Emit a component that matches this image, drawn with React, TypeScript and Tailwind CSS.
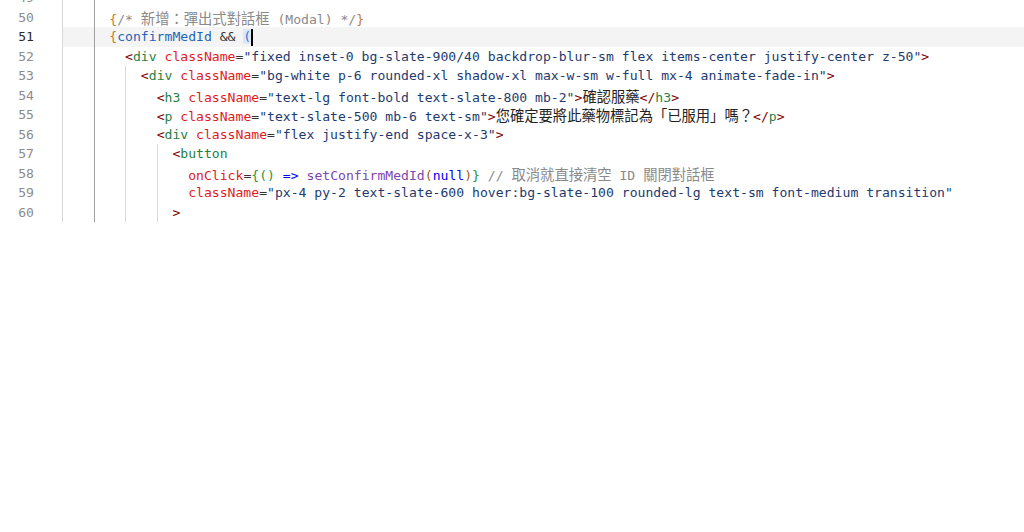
import React from "react";

type Tok = [string, string];

const C = {
  br1: "text-[#c17d2b]",
  cm: "text-[#8a8a8a]",
  id: "text-[#1f64b8]",
  op: "text-[#333333]",
  b2: "text-[#3b6fd6] bg-[#dce8f8]",
  tg: "text-[#800000]",
  tn: "text-[#267f42]",
  at: "text-[#e01b1b]",
  st: "text-[#1e3a6e]",
  tx: "text-[#222222]",
  gr: "text-[#319331]",
  kw: "text-[#0000ff]",
  fn: "text-[#7e46b0]",
  bn: "text-[#a0601a]",
};

type Line = { n: number; indent: number; toks: Tok[]; active?: boolean; cursor?: number };

const lines: Line[] = [
  { n: 49, indent: 6, toks: [] },
  { n: 50, indent: 6, toks: [["{", C.br1], ["/* 新增：彈出式對話框 (Modal) */", C.cm], ["}", C.br1]] },
  {
    n: 51,
    indent: 6,
    active: true,
    toks: [["{", C.br1], ["confirmMedId", C.id], [" && ", C.op], ["(", C.b2]],
  },
  {
    n: 52,
    indent: 8,
    toks: [
      ["<", C.tg],
      ["div", C.tn],
      [" ", C.op],
      ["className", C.at],
      ["=", C.op],
      ['"fixed inset-0 bg-slate-900/40 backdrop-blur-sm flex items-center justify-center z-50"', C.st],
      [">", C.tg],
    ],
  },
  {
    n: 53,
    indent: 10,
    toks: [
      ["<", C.tg],
      ["div", C.tn],
      [" ", C.op],
      ["className", C.at],
      ["=", C.op],
      ['"bg-white p-6 rounded-xl shadow-xl max-w-sm w-full mx-4 animate-fade-in"', C.st],
      [">", C.tg],
    ],
  },
  {
    n: 54,
    indent: 12,
    toks: [
      ["<", C.tg],
      ["h3", C.tn],
      [" ", C.op],
      ["className", C.at],
      ["=", C.op],
      ['"text-lg font-bold text-slate-800 mb-2"', C.st],
      [">", C.tg],
      ["確認服藥", C.tx],
      ["</", C.tg],
      ["h3", C.tn],
      [">", C.tg],
    ],
  },
  {
    n: 55,
    indent: 12,
    toks: [
      ["<", C.tg],
      ["p", C.tn],
      [" ", C.op],
      ["className", C.at],
      ["=", C.op],
      ['"text-slate-500 mb-6 text-sm"', C.st],
      [">", C.tg],
      ["您確定要將此藥物標記為「已服用」嗎？", C.tx],
      ["</", C.tg],
      ["p", C.tn],
      [">", C.tg],
    ],
  },
  {
    n: 56,
    indent: 12,
    toks: [
      ["<", C.tg],
      ["div", C.tn],
      [" ", C.op],
      ["className", C.at],
      ["=", C.op],
      ['"flex justify-end space-x-3"', C.st],
      [">", C.tg],
    ],
  },
  { n: 57, indent: 14, toks: [["<", C.tg], ["button", C.tn]] },
  {
    n: 58,
    indent: 16,
    toks: [
      ["onClick", C.at],
      ["=", C.op],
      ["{", C.gr],
      ["()", C.gr],
      [" ", C.op],
      ["=>", C.kw],
      [" ", C.op],
      ["setConfirmMedId", C.fn],
      ["(", C.bn],
      ["null", C.kw],
      [")", C.bn],
      ["}", C.gr],
      [" ", C.op],
      ["// 取消就直接清空 ID 關閉對話框", C.cm],
    ],
  },
  {
    n: 59,
    indent: 16,
    toks: [
      ["className", C.at],
      ["=", C.op],
      ['"px-4 py-2 text-slate-600 hover:bg-slate-100 rounded-lg text-sm font-medium transition"', C.st],
    ],
  },
  { n: 60, indent: 14, toks: [[">", C.tg]] },
];

const CJK = /([\u3000-\u303f\u3400-\u9fff\uff00-\uffef]+)/;

function renderText(text: string) {
  const parts = text.split(CJK);
  return parts.map((p, i) =>
    i % 2 === 1 ? (
      <span
        key={i}
        className="text-[14.3px] [font-family:'Noto_Sans_CJK_TC','Noto_Sans_CJK_SC',sans-serif]"
      >
        {p}
      </span>
    ) : (
      <React.Fragment key={i}>{p}</React.Fragment>
    )
  );
}

function Indent({ indent }: { indent: number }) {
  const blocks: React.ReactNode[] = [];
  let col = 0;
  while (col < indent) {
    const w = Math.min(4, indent - col);
    const guideClass =
      col === 4 ? "border-l border-[#a0a0a0]" : "border-l border-[#d9d9d9]";
    blocks.push(
      <span
        key={col}
        className={`inline-block h-[19.5px] align-top ${guideClass}`}
        style={{ width: `${w * 7.89}px` }}
      />
    );
    col += w;
  }
  return <>{blocks}</>;
}

export default function App() {
  return (
    <div className="w-[1024px] h-[532px] overflow-hidden bg-white">
      <div className="-mt-[12px] [font-family:'DejaVu_Sans_Mono',monospace] text-[13.1px]">
        {lines.map((l) => (
          <div key={l.n} className="flex h-[19.5px] leading-[19.5px]">
            <div
              className={`w-[62px] shrink-0 pr-[28px] text-right ${
                l.active ? "text-[#2b2b2b]" : "text-[#8c8c8c]"
              }`}
            >
              {l.n}
            </div>
            <div
              className={`flex-1 whitespace-pre ${l.active ? "bg-[#f4f4f4]" : ""}`}
            >
              <Indent indent={l.indent} />
              {l.toks.map((t, i) => (
                <span key={i} className={t[1]}>
                  {renderText(t[0])}
                </span>
              ))}
              {l.active && (
                <span className="inline-block h-[17px] w-[2px] -mr-[2px] bg-black align-middle" />
              )}
            </div>
          </div>
        ))}
      </div>
    </div>
  );
}
